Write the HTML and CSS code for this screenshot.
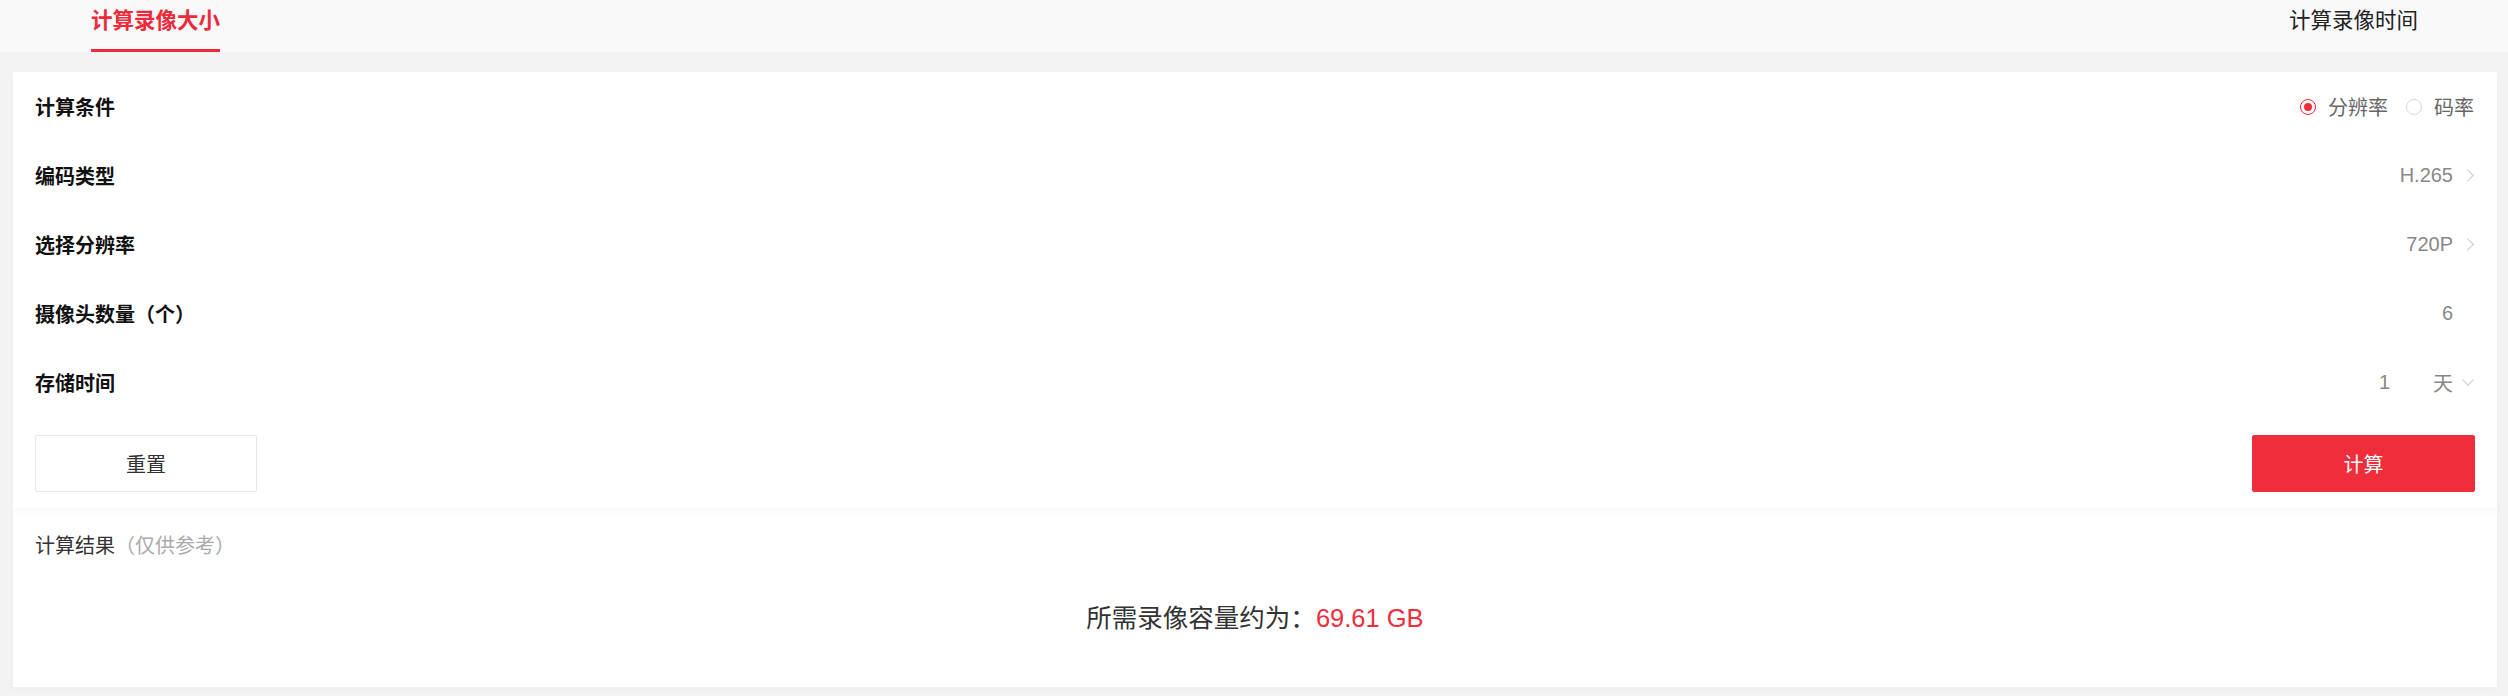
FILE: index.html
```html
<!DOCTYPE html>
<html lang="zh-CN">
<head>
<meta charset="utf-8">
<title>计算录像大小</title>
<link rel="stylesheet" href="styles.css">
</head>
<body>
<header class="tabs">
  <div class="tab active">计算录像大小</div>
  <div class="tab">计算录像时间</div>
</header>
<main class="content">
  <section class="card form-card">
    <div class="row">
      <div class="label">计算条件</div>
      <div class="radios">
        <span class="radio checked"></span><span class="radio-text">分辨率</span>
        <span class="radio"></span><span class="radio-text">码率</span>
      </div>
    </div>
    <div class="row">
      <div class="label">编码类型</div>
      <div class="value">H.265<span class="chev-right"></span></div>
    </div>
    <div class="row">
      <div class="label">选择分辨率</div>
      <div class="value">720P<span class="chev-right"></span></div>
    </div>
    <div class="row">
      <div class="label">摄像头数量（个）</div>
      <div class="value">6<span class="chev-space"></span></div>
    </div>
    <div class="row">
      <div class="label">存储时间</div>
      <div class="value"><span class="num">1</span>天<span class="chev-down"></span></div>
    </div>
    <div class="actions">
      <button class="btn btn-reset">重置</button>
      <button class="btn btn-calc">计算</button>
    </div>
  </section>
  <section class="card result-card">
    <div class="result-title">计算结果<span class="hint">（仅供参考）</span></div>
    <div class="result">所需录像容量约为：<span class="amount">69.61 GB</span></div>
  </section>
</main>
</body>
</html>
```
FILE: styles.css
```css
* { box-sizing: border-box; }
html, body {
  margin: 0;
  padding: 0;
  background: #f3f3f3;
  font-family: "Liberation Sans", "Noto Sans CJK SC", sans-serif;
  color: #333;
}
.tabs {
  height: 52px;
  background: #f9f9f9;
  display: flex;
  justify-content: space-between;
  padding: 0 90px 0 91px;
}
.tab {
  font-size: 21.5px;
  line-height: 42px;
  height: 52px;
  color: #222;
  white-space: nowrap;
}
.tab.active {
  color: #ee2a3a;
  font-weight: bold;
  border-bottom: 3px solid #ee2a3a;
}
.content {
  padding: 20px 11px 9px 13px;
}
.card {
  background: #fff;
}
.form-card {
  position: relative;
  z-index: 1;
  padding: 0 22px 16px 22px;
  box-shadow: 0 3px 6px rgba(0, 0, 0, 0.035);
}
.row {
  height: 69px;
  display: flex;
  align-items: center;
  justify-content: space-between;
}
.label {
  font-size: 20px;
  font-weight: bold;
  color: #111;
}
.radios {
  display: flex;
  align-items: center;
  font-size: 20px;
  color: #666;
}
.radio {
  width: 16px;
  height: 16px;
  border-radius: 50%;
  border: 1px solid #d9d9d9;
  display: inline-flex;
  align-items: center;
  justify-content: center;
  margin-right: 12px;
}
.radio.checked {
  border-color: #f02d3a;
}
.radio.checked::after {
  content: "";
  width: 8px;
  height: 8px;
  border-radius: 50%;
  background: #f02d3a;
}
.radio-text {
  margin-right: 18px;
}
.radio-text:last-child {
  margin-right: 1px;
}
.value {
  display: flex;
  align-items: center;
  font-size: 20px;
  color: #888;
}
.num {
  margin-right: 43px;
}
.chev-right, .chev-space, .chev-down {
  display: inline-block;
  width: 22px;
  height: 14px;
  position: relative;
}
.chev-right::after {
  content: "";
  position: absolute;
  right: 3px;
  top: 2px;
  width: 8px;
  height: 8px;
  border-top: 1px solid #c8c8c8;
  border-right: 1px solid #c8c8c8;
  transform: rotate(45deg);
}
.chev-down::after {
  content: "";
  position: absolute;
  right: 3px;
  top: 0px;
  width: 7px;
  height: 7px;
  border-bottom: 1px solid #c8c8c8;
  border-right: 1px solid #c8c8c8;
  transform: rotate(45deg);
}
.actions {
  display: flex;
  justify-content: space-between;
  margin-top: 18px;
}
.btn {
  height: 57px;
  font-family: inherit;
  font-size: 20px;
  border-radius: 2px;
  cursor: pointer;
}
.btn-reset {
  width: 222px;
  background: #fff;
  border: 1px solid #e6e6e6;
  color: #333;
}
.btn-calc {
  width: 223px;
  background: #f02d3a;
  border: 1px solid #f02d3a;
  color: #fff;
}
.result-card {
  height: 179px;
  padding: 24px 22px 0 22px;
  box-shadow: 0 2px 6px rgba(0, 0, 0, 0.03);
}
.result-title {
  font-size: 20px;
  line-height: 28px;
  color: #333;
}
.hint {
  color: #aaa;
}
.result {
  margin-top: 40px;
  text-align: center;
  font-size: 25.5px;
  line-height: 36px;
  color: #333;
}
.amount {
  color: #f02d3a;
}
```
